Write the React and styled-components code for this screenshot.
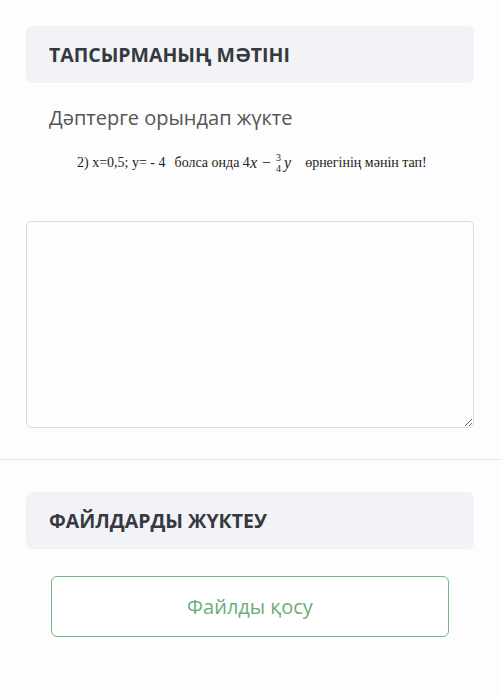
import React from "react";
import styled, { createGlobalStyle } from "styled-components";

const Global = createGlobalStyle`
  html, body { margin: 0; padding: 0; background: #fdfdfd; }
  body { font-family: "Open Sans", "Noto Sans", sans-serif; }
`;

const Page = styled.div`
  width: 500px;
  min-height: 697px;
  background: #fdfdfd;
  display: flex;
  flex-direction: column;
`;

const Section = styled.section`
  padding: ${(p) => p.$pad};
  display: flex;
  flex-direction: column;
`;

const HeaderBar = styled.div`
  height: 57px;
  background: #f2f3f6;
  border-radius: 6px;
  display: flex;
  align-items: center;
  padding: 0 23px;
  font-size: 19.5px;
  font-weight: 700;
  color: #363940;
`;

const Subtitle = styled.div`
  margin: 21px 0 0 23px;
  font-size: 20px;
  line-height: 28px;
  color: #555;
`;

const MathLine = styled.div`
  margin: 17px 0 0 51px;
  font-family: "Liberation Serif", "Times New Roman", serif;
  font-size: 14px;
  color: #222;
  display: flex;
  align-items: center;
  height: 28px;
  white-space: pre;
`;

const Gap = styled.span`
  display: inline-block;
  width: ${(p) => p.$w}px;
`;

const Var = styled.span`
  font-style: italic;
  font-size: 16px;
`;

const Minus = styled.span`
  font-size: 16px;
  margin: 0 5px;
`;

const Frac = styled.span`
  display: inline-flex;
  flex-direction: column;
  align-items: center;
  font-size: 10px;
  line-height: 11px;
  margin: 0 3px 0 0;
`;

const TextArea = styled.textarea`
  display: block;
  margin-top: 44px;
  height: 207px;
  box-sizing: border-box;
  width: 100%;
  border: 1px solid #dcdcdc;
  border-radius: 5px;
  background: #fefefe;
  resize: vertical;
  font-family: inherit;
`;

const Divider = styled.hr`
  margin: 31px 0 0;
  border: none;
  border-top: 1px solid #e6e6e6;
  height: 0;
`;

const UploadButton = styled.button`
  margin: 27px 25px 0;
  height: 61px;
  box-sizing: border-box;
  border: 1.5px solid #72b883;
  border-radius: 6px;
  background: #fff;
  color: #6aad7a;
  font-family: "Open Sans", "Noto Sans", sans-serif;
  font-size: 20px;
  cursor: pointer;
`;

export default function App() {
  return (
    <Page>
      <Global />
      <Section $pad="26px 26px 0">
        <HeaderBar>ТАПСЫРМАНЫҢ МӘТІНІ</HeaderBar>
        <Subtitle>Дәптерге орындап жүкте</Subtitle>
        <MathLine>
          {"2) x=0,5; y= - 4"}
          <Gap $w={9} />
          {"болса онда 4"}
          <Var>x</Var>
          <Minus>−</Minus>
          <Frac>
            <span>3</span>
            <span>4</span>
          </Frac>
          <Var>y</Var>
          <Gap $w={14} />
          {"өрнегінің мәнін тап!"}
        </MathLine>
        <TextArea />
      </Section>
      <Divider />
      <Section $pad="32px 26px 0">
        <HeaderBar>ФАЙЛДАРДЫ ЖҮКТЕУ</HeaderBar>
        <UploadButton>Файлды қосу</UploadButton>
      </Section>
    </Page>
  );
}
